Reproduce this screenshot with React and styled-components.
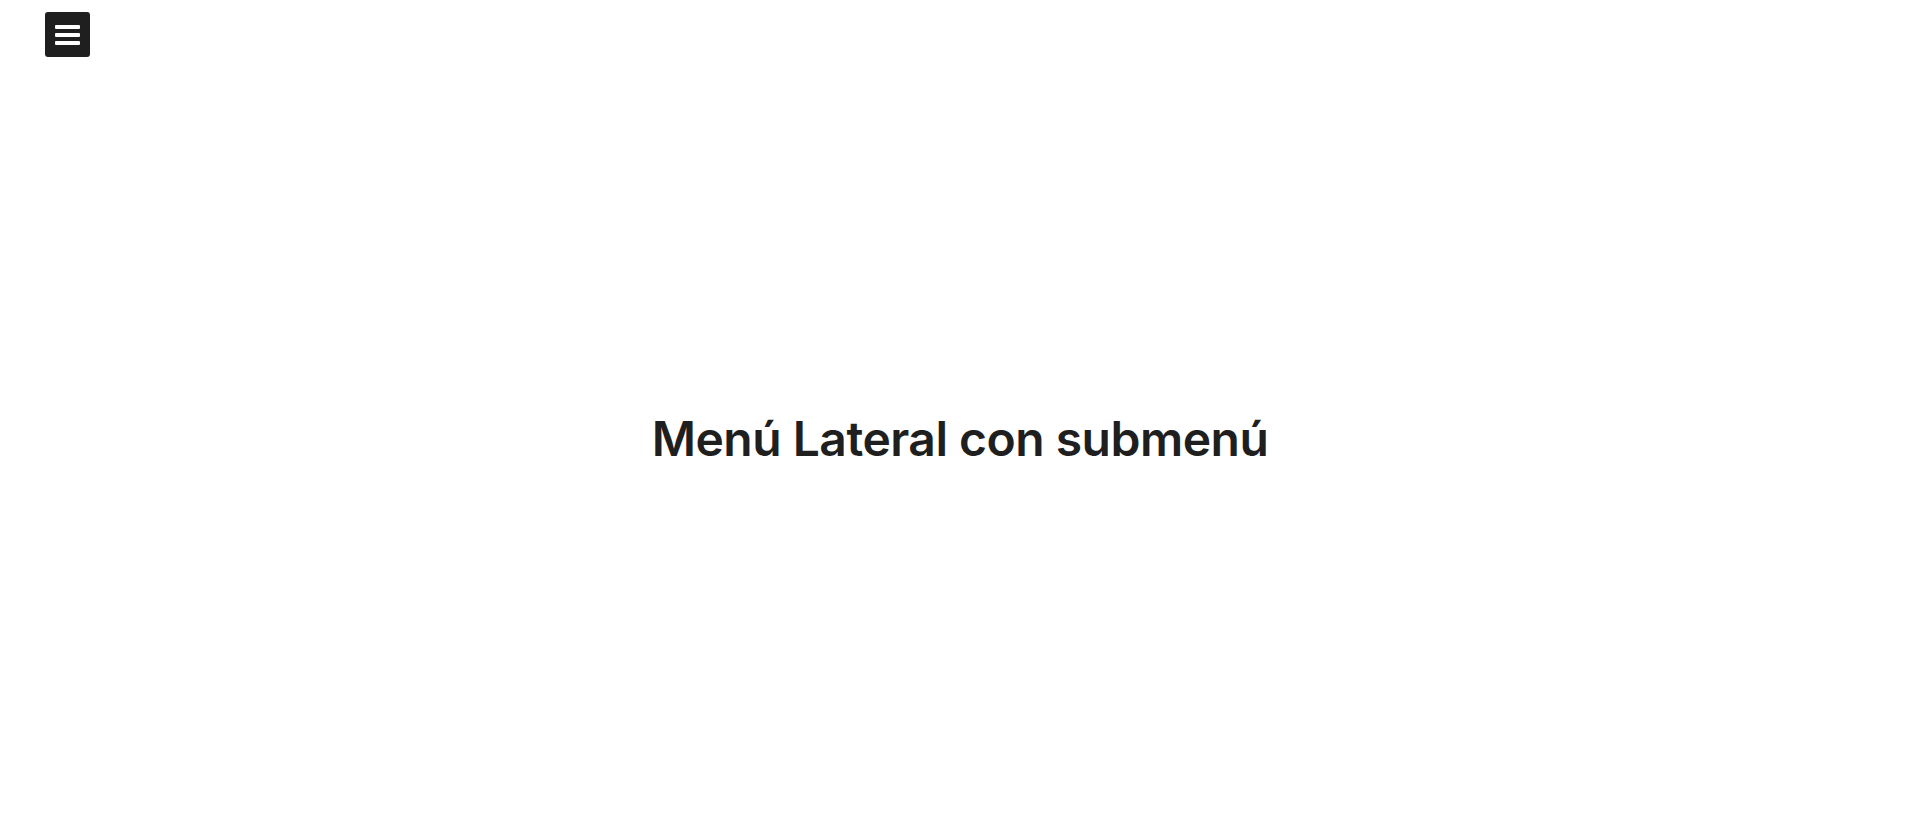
import React from 'react';
import styled, { createGlobalStyle } from 'styled-components';

const GlobalStyle = createGlobalStyle`
    * {
        margin: 0;
        padding: 0;
        box-sizing: border-box;
    }

    body {
        font-family: 'Inter', 'Noto Sans', sans-serif;
        background: #ffffff;
        color: #1f1f1f;
    }
`;

const Page = styled.div`
    min-height: 100vh;
    display: flex;
    flex-direction: column;
`;

const TopBar = styled.header`
    padding: 12px 45px;
    display: flex;
`;

const MenuButton = styled.button`
    width: 45px;
    height: 45px;
    border: none;
    border-radius: 3px;
    background: #1f1f1f;
    display: flex;
    flex-direction: column;
    justify-content: center;
    align-items: center;
    gap: 4px;
    cursor: pointer;

    span {
        display: block;
        width: 25px;
        height: 4px;
        border-radius: 1px;
        background: #ffffff;
    }
`;

const Hero = styled.main`
    flex: 1;
    display: flex;
    justify-content: center;
    align-items: center;
    padding-bottom: 18px;
`;

const Title = styled.h1`
    font-size: 48px;
    font-weight: 600;
    letter-spacing: -0.5px;
    color: #1f1f1f;
`;

function App() {
    return (
        <Page>
            <GlobalStyle />
            <TopBar>
                <MenuButton aria-label="menu">
                    <span />
                    <span />
                    <span />
                </MenuButton>
            </TopBar>
            <Hero>
                <Title>Menú Lateral con submenú</Title>
            </Hero>
        </Page>
    );
}

export default App;
